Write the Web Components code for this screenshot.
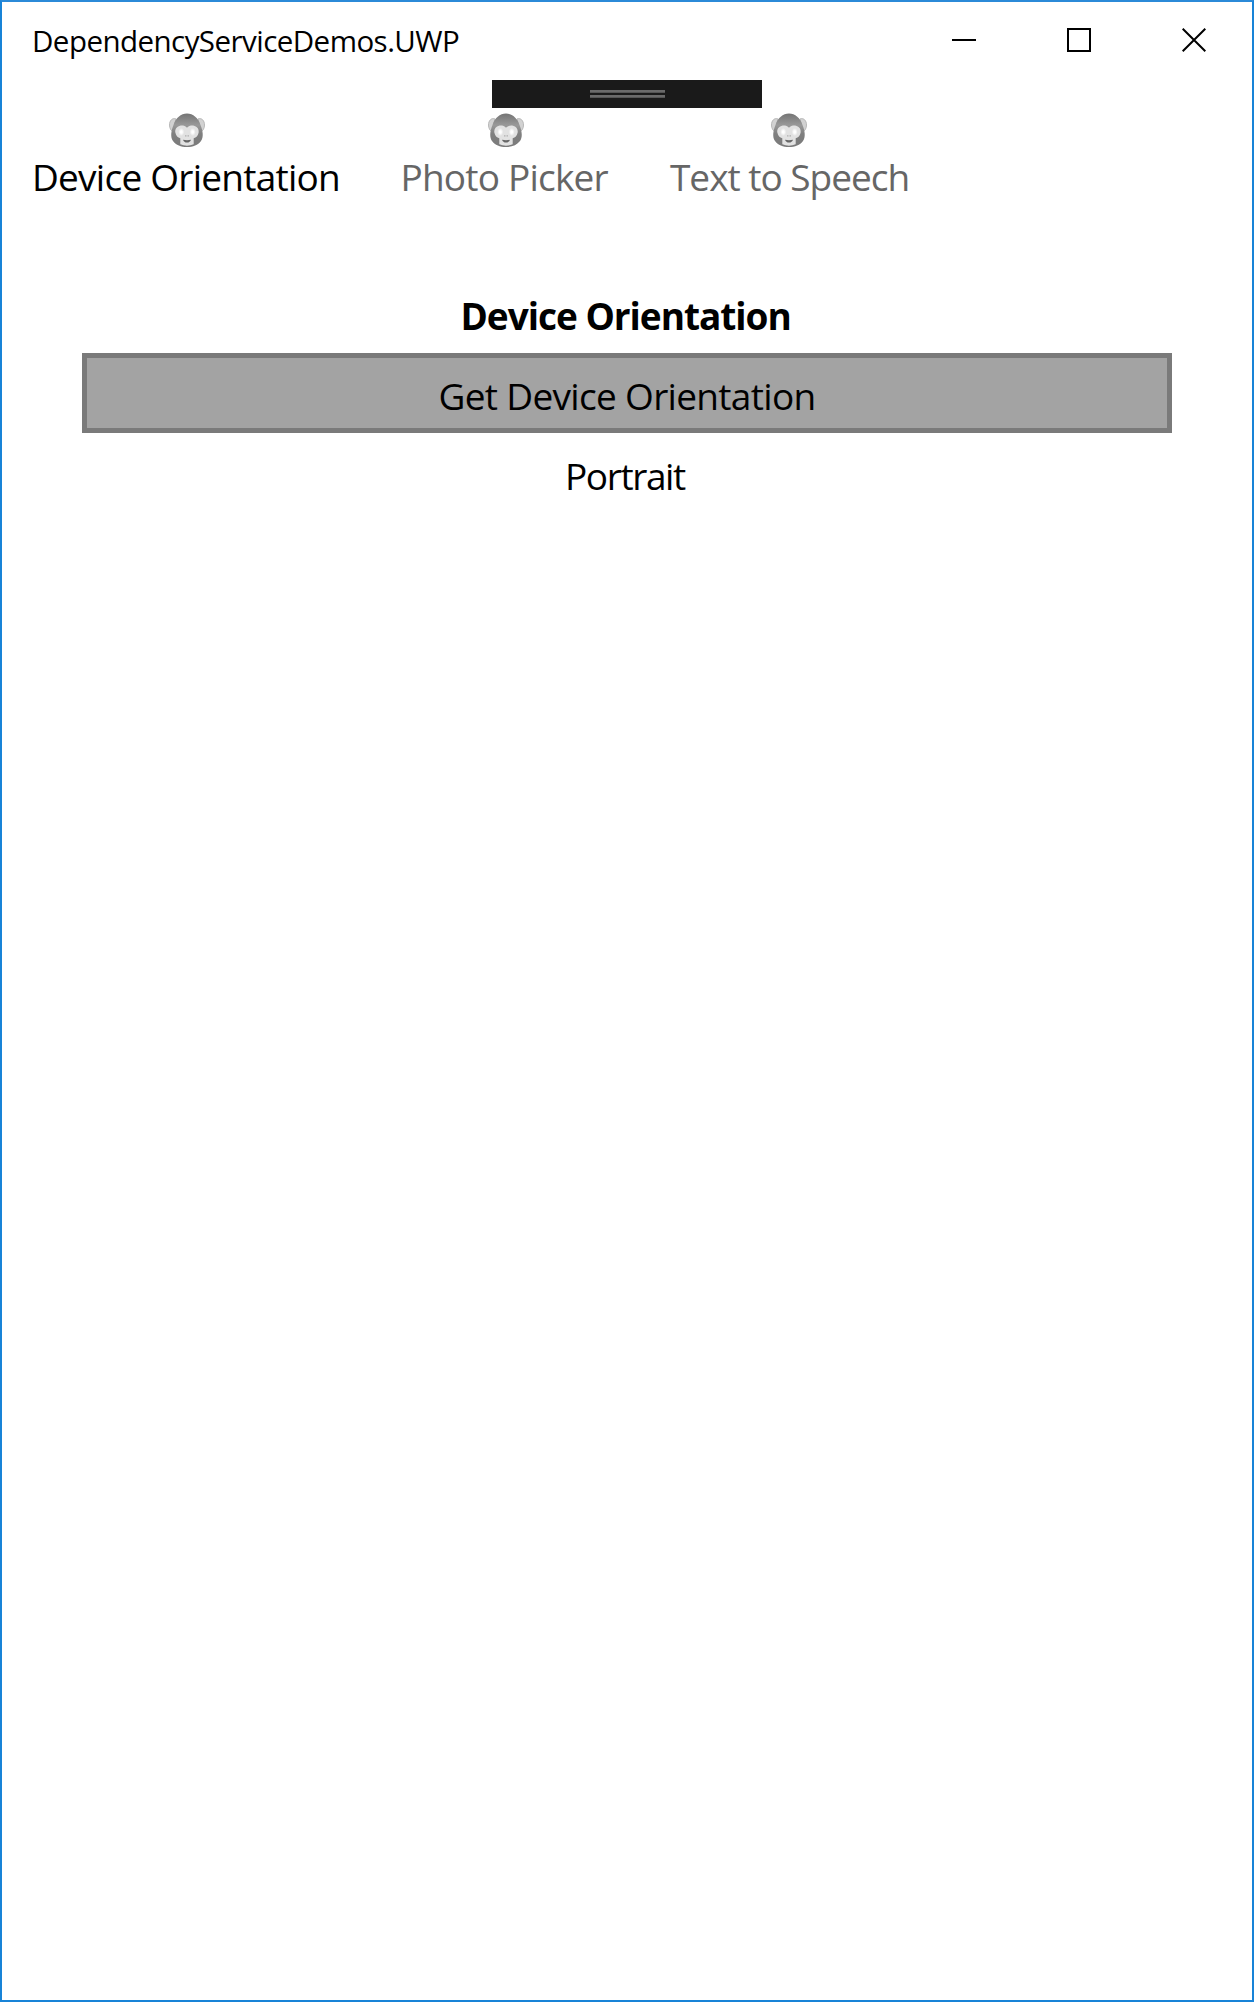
<!DOCTYPE html>
<html lang="en">
<head>
<meta charset="utf-8">
<title>DependencyServiceDemos.UWP</title>
<style>
html,body{margin:0;height:100%}
body{font-family:"Segoe UI","Open Sans","Noto Sans",sans-serif;color:#000;background:#fff}
</style>
</head>
<body>
<app-window>
  <title-bar slot="title"><ink-text size="29.5" ink="425" line="40">DependencyServiceDemos.UWP</ink-text></title-bar>
  <debug-handle slot="title"></debug-handle>
  <tab-strip slot="tabs">
    <tab-item selected><ink-text size="37" ink="303">Device Orientation</ink-text></tab-item>
    <tab-item><ink-text size="37" ink="205">Photo Picker</ink-text></tab-item>
    <tab-item><ink-text size="37" ink="237.500">Text to Speech</ink-text></tab-item>
  </tab-strip>
  <orientation-page></orientation-page>
</app-window>
<script>
const define = (name, html, init) => customElements.define(name, class extends HTMLElement {
  constructor() {
    super();
    this.attachShadow({mode: 'open'}).innerHTML = html;
  }
  connectedCallback() { if (init) init(this); }
});

// A line of text whose box spans its visible glyph edges; tracking fills the requested width.
const pen = document.createElement('canvas').getContext('2d');
define('ink-text', `<style>
  :host{display:block;white-space:nowrap;flex:none}
  span{display:block}
</style><span><slot></slot></span>`, el => {
  const span = el.shadowRoot.querySelector('span');
  const text = el.textContent;
  const size = el.getAttribute('size');
  const ink = +el.getAttribute('ink');
  const weight = el.getAttribute('weight') || 400;
  pen.font = `${weight} ${size}px "Segoe UI","Open Sans","Noto Sans",sans-serif`;
  const m = pen.measureText(text);
  const natural = m.actualBoundingBoxLeft + m.actualBoundingBoxRight;
  el.style.width = ink + 'px';
  span.style.cssText = `font-size:${size}px;font-weight:${weight};line-height:${el.getAttribute('line') || 50}px;` +
    `letter-spacing:${(ink - natural) / (text.length - 1)}px;margin-left:${m.actualBoundingBoxLeft}px`;
});

define('monkey-icon', `<style>:host{display:block;width:36px;height:35px}svg{display:block}</style>
<svg width="36" height="35" viewBox="0 0 36 35">
  <defs>
    <linearGradient id="head" x1="0" y1="0" x2="0" y2="1"><stop offset="0" stop-color="#747474"/><stop offset=".35" stop-color="#999"/><stop offset=".6" stop-color="#808080"/><stop offset="1" stop-color="#7a7a7a"/></linearGradient>
    <radialGradient id="eye"><stop offset=".3" stop-color="#fff"/><stop offset="1" stop-color="#e2e2e2"/></radialGradient>
  </defs>
  <path d="M7 6C3.500 4.500.5 7.500.5 12C.5 15 2 18 4 18.500ZM29 6C32.500 4.500 35.500 7.500 35.500 12C35.500 15 34 18 32 18.500Z" fill="#d2d2d2" stroke="#b8b8b8"/>
  <path d="M18 .5C24 .5 29.500 5 31.500 12C34 18 34.800 24 32 28C29 32 24 34 18 34S7 32 4 28C1.200 24 2 18 4.500 12C6.500 5 12 .5 18 .5Z" fill="url(#head)"/>
  <path d="M18 14.700C16.500 12.800 13.500 12.300 11 12.700C7.600 13.500 5.700 16.500 6.400 19.800C7 22.800 8.800 24.700 11.300 25.200V31.300Q18 34 24.700 31.300V25.200C27.200 24.700 29 22.800 29.600 19.800C30.300 16.500 28.400 13.500 25 12.700C22.500 12.300 19.500 12.800 18 14.700Z" fill="#e2e2e2"/>
  <ellipse cx="12.300" cy="19" rx="3" ry="4" fill="url(#eye)"/>
  <ellipse cx="23.700" cy="19" rx="3" ry="4" fill="url(#eye)"/>
  <path d="M16 22.800h1.500M18.500 22.800h1.500" stroke="#b0b0b0" stroke-width="1.300"/>
  <path d="M14 26.800Q18 27.600 22 26.800Q21 29.600 18 29.600T14 26.800Z" fill="#666"/>
</svg>`);

define('title-bar', `<style>
  :host{display:flex;justify-content:space-between;height:78px;box-sizing:border-box;padding:19px 46px 0 32px}
  .buttons{display:flex;gap:91px;padding-top:7px}
  svg{display:block;width:24px;height:24px;fill:none;stroke:#000;stroke-width:2}
</style>
<slot></slot>
<div class="buttons">
  <svg viewBox="0 0 24 24"><path d="M0 12H24"/></svg>
  <svg viewBox="0 0 24 24"><path d="M1 1H23V23H1Z"/></svg>
  <svg viewBox="0 0 24 24"><path d="M.7.7L23.300 23.300M23.300.7L.7 23.300"/></svg>
</div>`);

define('debug-handle', `<style>
  :host{display:flex;flex-direction:column;align-items:center;gap:2px;width:270px;height:28px;margin-left:490px;box-sizing:border-box;padding-top:10px;background:#1a1a1a}
  i{width:75px;height:2px;background:#6a6a6a;border-bottom:1px solid #555}
</style><i></i><i></i>`);

define('tab-strip', `<style>
  :host{display:flex;height:98px;box-sizing:border-box;padding:5px 0 0 33px;gap:61.500px}
  ::slotted([selected]){margin-right:4px}
</style><slot></slot>`);

define('tab-item', `<style>
  :host{display:flex;flex-direction:column;align-items:center;gap:4px;color:#666}
  :host([selected]){color:#000}
</style><monkey-icon></monkey-icon><slot></slot>`);

define('flat-button', `<style>
  :host{display:block}
  button{display:flex;justify-content:center;width:100%;height:80px;box-sizing:border-box;margin:0;padding:13px 0 0;border:5px solid #7a7a7a;background:#a3a3a3;font:inherit;color:#000}
</style><button><slot></slot></button>`);

define('orientation-page', `<style>
  :host{display:flex;flex-direction:column;align-items:center;padding:85px 80px 0}
  flat-button{align-self:stretch;margin:12px 0 18px}
  ink-text[weight]{margin-right:1px}
</style>
<ink-text size="37" weight="700" ink="326">Device Orientation</ink-text>
<flat-button><ink-text size="37" ink="373">Get Device Orientation</ink-text></flat-button>
<ink-text size="37" ink="118">Portrait</ink-text>`);

define('app-window', `<style>
  :host{display:flex;flex-direction:column;box-sizing:border-box;height:100vh;border:2px solid #1883d7;border-top-color:#2b8ad8;background:#fff;overflow:hidden}
</style><slot name="title"></slot><slot name="tabs"></slot><slot></slot>`);
</script>
</body>
</html>
